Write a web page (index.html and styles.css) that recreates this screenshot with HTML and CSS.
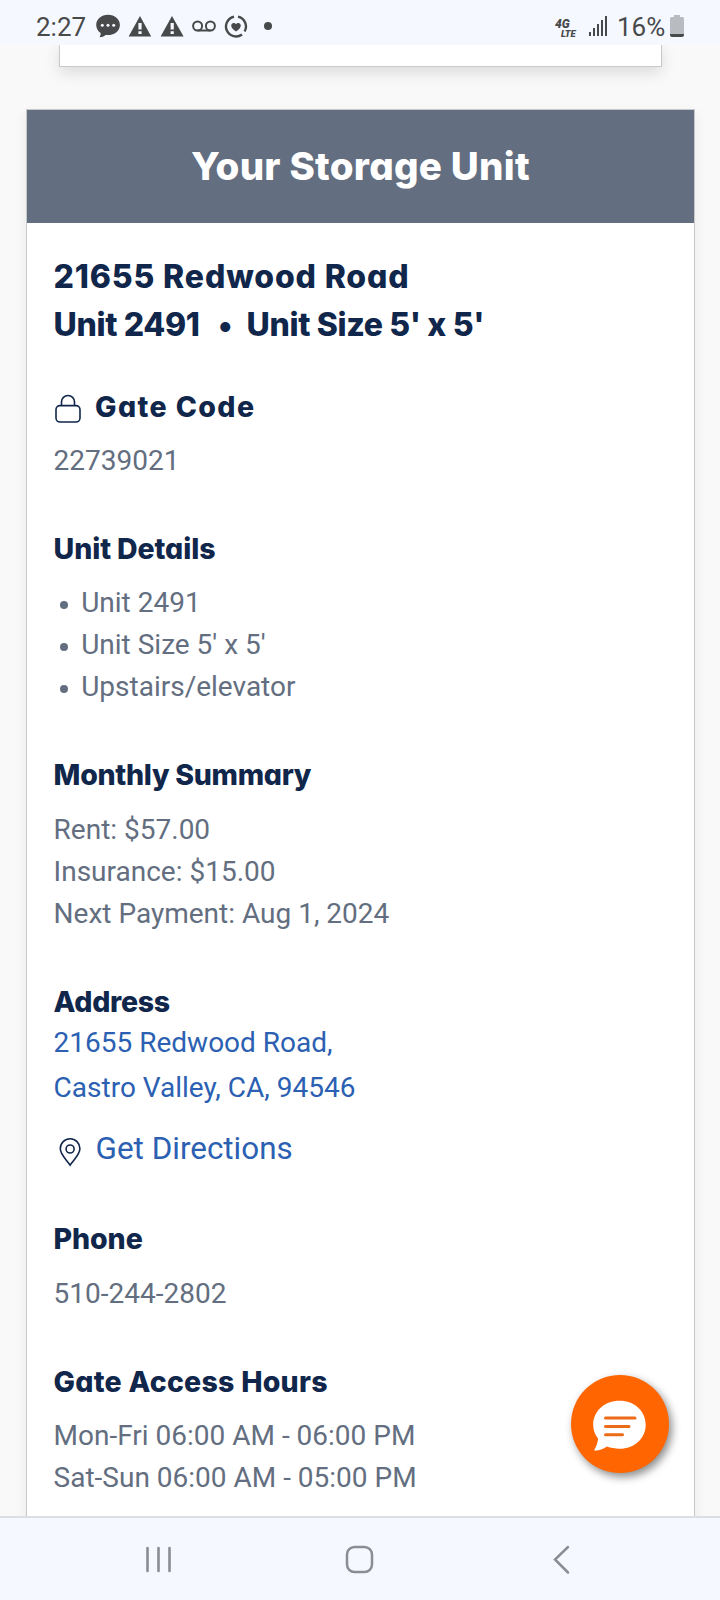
FILE: index.html
```html
<!DOCTYPE html>
<html lang="en">
<head>
<meta charset="utf-8">
<title>Your Storage Unit</title>
<link rel="stylesheet" href="styles.css">
</head>
<body>
<div class="screen">
  <header class="status">
    <span class="clock">2:27</span>
    <div class="notices">
      <svg width="24" height="24" viewBox="0 0 24 24"><path d="M12 0.8C5.3 .8 .2 5.200 .2 11c0 3.300 1.700 6.100 4.400 8 .2 1.500-.2 2.900-1.100 4.200 2.400-.1 4.500-.9 6-2.300.8.200 1.600.2 2.500.2 6.700 0 11.900-4.300 11.900-10.100S18.700.8 12 .8z" fill="#48494b"/><g fill="#f5f9ff"><circle cx="6.300" cy="11.300" r="1.500"/><circle cx="12" cy="11.300" r="1.500"/><circle cx="17.700" cy="11.300" r="1.500"/></g></svg>
      <svg width="24" height="24" viewBox="0 0 24 24"><path d="M12 2L23.200 22.500H.600z" fill="#48494b"/><path d="M10.400 9h3.200v6.500h-3.200zM10.400 17.200h3.200v2.800h-3.200z" fill="#f5f9ff"/></svg>
      <svg width="24" height="24" viewBox="0 0 24 24"><path d="M12 2L23.600 22.500H.600z" fill="#48494b"/><path d="M10.600 9h3.200v6.500h-3.200zM10.600 17.200h3.200v2.800h-3.200z" fill="#f5f9ff"/></svg>
      <svg width="24" height="24" viewBox="0 0 24 24"><g fill="none" stroke="#48494b" stroke-width="2"><circle cx="5.600" cy="12" r="4.500"/><circle cx="18.400" cy="12" r="4.500"/><path d="M5.600 16.500h12.800"/></g></svg>
      <svg width="24" height="24" viewBox="0 0 24 24"><g fill="none" stroke="#48494b" stroke-width="2.400"><path d="M10 2.700A10 10 0 1 0 18 20.500"/><path d="M14 2.700A10 10 0 0 1 20.600 17.500"/></g><path d="M12 17.500C8.800 15.200 7.200 13.600 7.200 11.500c0-2.800 3.500-3.400 4.800-1.200 1.300-2.200 4.800-1.600 4.800 1.200 0 2.100-1.600 3.700-4.800 6z" fill="#48494b"/></svg>
    </div>
    <span class="more-dot"></span>
    <div class="network"><span>4G</span><span class="lte">LTE</span></div>
    <svg class="signal" width="18" height="20" viewBox="0 0 18 20"><path d="M0 16h2v4H0zM4 12h2v8H4zM8 8h2v12H8zM12 4h2v16h-2zM16 0h2v20h-2z" fill="#48494b"/></svg>
    <span class="percent">16%</span>
    <svg class="battery" width="14" height="24" viewBox="0 0 14 24"><path d="M4 1h6v2h2.500Q14 3 14 5v15H0V5q0-2 1.500-2H4z" fill="#b8bbc0"/><path d="M0 20h14v1q0 2-2 2H2q-2 0-2-2z" fill="#48494b"/></svg>
  </header>

  <main class="content">
    <div class="previous-card"></div>
    <section class="card">
      <h1 class="card-title">Your Storage Unit</h1>
      <div class="card-body">
        <h2 class="unit-name"><span class="road">21655 Redwood Road</span><br>Unit 2491 <span class="sep">•</span> Unit Size 5' x 5'</h2>

        <div class="block gate">
          <h3><svg class="lock" width="26" height="30" viewBox="0 0 26 30" fill="none" stroke="#10264b" stroke-width="1.600"><rect x="1" y="11.600" width="24" height="16.400" rx="4"/><path d="M6.500 11.500V8a6.500 6.500 0 0 1 13 0v3.500"/></svg><span>Gate Code</span></h3>
          <p>22739021</p>
        </div>

        <div class="block details">
          <h3>Unit Details</h3>
          <ul><li>Unit 2491</li><li>Unit Size 5' x 5'</li><li>Upstairs/elevator</li></ul>
        </div>

        <div class="block summary">
          <h3>Monthly Summary</h3>
          <p>Rent: $57.00</p><p>Insurance: $15.00</p><p>Next Payment: Aug 1, 2024</p>
        </div>

        <div class="block address">
          <h3>Address</h3>
          <a>21655 Redwood Road,<br>Castro Valley, CA, 94546</a>
          <a class="directions"><svg width="42" height="30" viewBox="0 0 42 30" fill="none" stroke="#10264b" stroke-width="1.600"><path d="M16.100 28.200C12.600 22.500 6.300 18 6.300 11.600a9.800 9.800 0 0 1 19.600 0c0 6.400-6.300 10.900-9.800 16.600z"/><circle cx="16.100" cy="12" r="4"/></svg><span>Get Directions</span></a>
        </div>

        <div class="block phone">
          <h3>Phone</h3>
          <p>510-244-2802</p>
        </div>

        <div class="block hours">
          <h3>Gate Access Hours</h3>
          <p>Mon-Fri 06:00 AM - 06:00 PM</p><p>Sat-Sun 06:00 AM - 05:00 PM</p>
        </div>
      </div>
    </section>
    <div class="chat"><svg width="98" height="98" viewBox="0 0 98 98"><path d="M48.500 25.700c-15 0-26.300 10.400-26.300 24 0 5.400 1.700 10 4.900 13.800-.3 3.800-1.600 7.500-3.800 11.600 0 .5.400.7 1 .7 4-.2 8-1.700 11.600-4.200 3.900 1.400 7.900 2.100 12.600 2.100 15 0 26.200-10.400 26.200-24s-11.200-24-26.200-24z" fill="#fff"/><path d="M34.500 43h29.500M34.500 51.500h23.500M34.500 59.700h17" stroke="#ec6b17" stroke-width="3" stroke-linecap="round"/></svg></div>
  </main>

  <nav class="nav">
    <svg width="28" height="30" viewBox="0 0 28 30"><path d="M2.500 3v23M13.500 3v23M24.500 3v23" stroke="#8b8d92" stroke-width="2.600" stroke-linecap="round"/></svg>
    <svg width="30" height="30" viewBox="0 0 30 30"><rect x="2" y="2" width="25" height="25" rx="7.500" fill="none" stroke="#8b8d92" stroke-width="2.500"/></svg>
    <svg width="20" height="30" viewBox="0 0 20 30"><path d="M17 2L4 14.500 17 27.500" fill="none" stroke="#8b8d92" stroke-width="2.500" stroke-linecap="round"/></svg>
  </nav>
</div>
</body>
</html>
```
FILE: styles.css
```css
* { box-sizing: border-box; }
body { margin: 0; background: #f9f9f9; font-family: Roboto, sans-serif; }
h1, h2, h3, p, ul { margin: 0; padding: 0; }
svg { display: block; flex: none; }
.screen { width: 720px; height: 1600px; display: flex; flex-direction: column; overflow: hidden; }

.status { height: 45px; flex: none; display: flex; align-items: flex-start; background: #f5f9ff; color: #48494b; padding-left: 36px; position: relative; z-index: 1; }
.clock { width: 60px; margin-top: 11px; font-size: 26px; line-height: 32px; }
.notices { display: flex; gap: 8px; margin-top: 14px; }
.more-dot { width: 8px; height: 8px; border-radius: 50%; background: #48494b; margin: 22px 0 0 16px; }
.network { width: 34px; margin: 18px 0 0 283px; font: italic 900 12px/12px Roboto, sans-serif; display: flex; flex-direction: column; }
.network .lte { font-size: 9.500px; line-height: 8px; margin-left: 6px; letter-spacing: -.2px; }
.signal { margin-top: 16px; }
.percent { width: 62px; padding-left: 10px; margin-top: 11px; font-size: 26px; line-height: 32px; white-space: nowrap; }
.battery { margin: 14px 0 0 1px; }

.content { height: 1471px; flex: none; overflow: hidden; position: relative; display: flex; flex-direction: column; }
.previous-card { height: 22px; flex: none; margin: 0 58px 0 59px; background: #fff; border: 1px solid #c8c9cb; border-top: 0; box-shadow: 0 5px 16px rgba(0, 0, 0, .13); }
.card { width: 669px; flex: none; height: 1500px; margin: 42px 0 0 26px; background: #fff; border: 1px solid #c8c9cb; box-shadow: 0 5px 12px rgba(0, 0, 0, .07); }
h1, h2, h3 { font-family: Inter, sans-serif; font-weight: 800; font-feature-settings: "cv11"; white-space: nowrap; color: #10264b; }
.card-title { height: 113px; background: #636e80; color: #fff; font-size: 38.500px; line-height: 46px; letter-spacing: .25px; padding-top: 33px; text-align: center; }
.card-body { padding: 30px 27px 0 26.600px; color: #636e80; font-size: 28px; }
.unit-name { font-size: 32px; line-height: 48px; letter-spacing: -.350px; }
.road { letter-spacing: .850px; }
.sep { margin: 0 8px 0 12px; }
.block { margin-bottom: 47px; }
.gate { margin-top: 38px; }
h3 { font-size: 28.500px; line-height: 40px; margin-bottom: 13px; display: flex; }
.block p, li { line-height: 42px; white-space: nowrap; }
.lock { margin: 7px 14.500px 0 1px; }
.gate h3 { letter-spacing: 1.400px; }
.details h3 { letter-spacing: -.100px; }
.summary h3 { letter-spacing: -.300px; margin-bottom: 14px; }
ul { list-style: none; }
li { display: flex; align-items: center; gap: 13px; }
li::before { content: ""; width: 8px; height: 8px; border-radius: 50%; background: #636e80; margin: 3px 0 0 6.600px; }
.address { margin-bottom: 49px; }
.address h3 { margin-bottom: -2px; letter-spacing: -.300px; }
.address a { display: block; color: #2b60b2; line-height: 45px; }
.address .directions { display: flex; font-size: 31.400px; line-height: 42px; margin-top: 18px; }
.directions svg { margin-top: 9px; }
.phone h3 { letter-spacing: -.100px; margin-bottom: 14px; }
.hours h3 { letter-spacing: .250px; }
.chat { position: absolute; left: 571px; top: 1330px; width: 98px; height: 98px; border-radius: 50%; background: #ff6500; box-shadow: 3px 4px 8px rgba(0, 0, 0, .45); }

.nav { height: 84px; flex: none; border-top: 2px solid #dbdfe5; background: #f5f9ff; display: flex; align-items: flex-start; padding: 27px 0 0 145px; }
.nav svg:nth-child(2) { margin-left: 172px; }
.nav svg:nth-child(3) { margin-left: 176px; }
```
